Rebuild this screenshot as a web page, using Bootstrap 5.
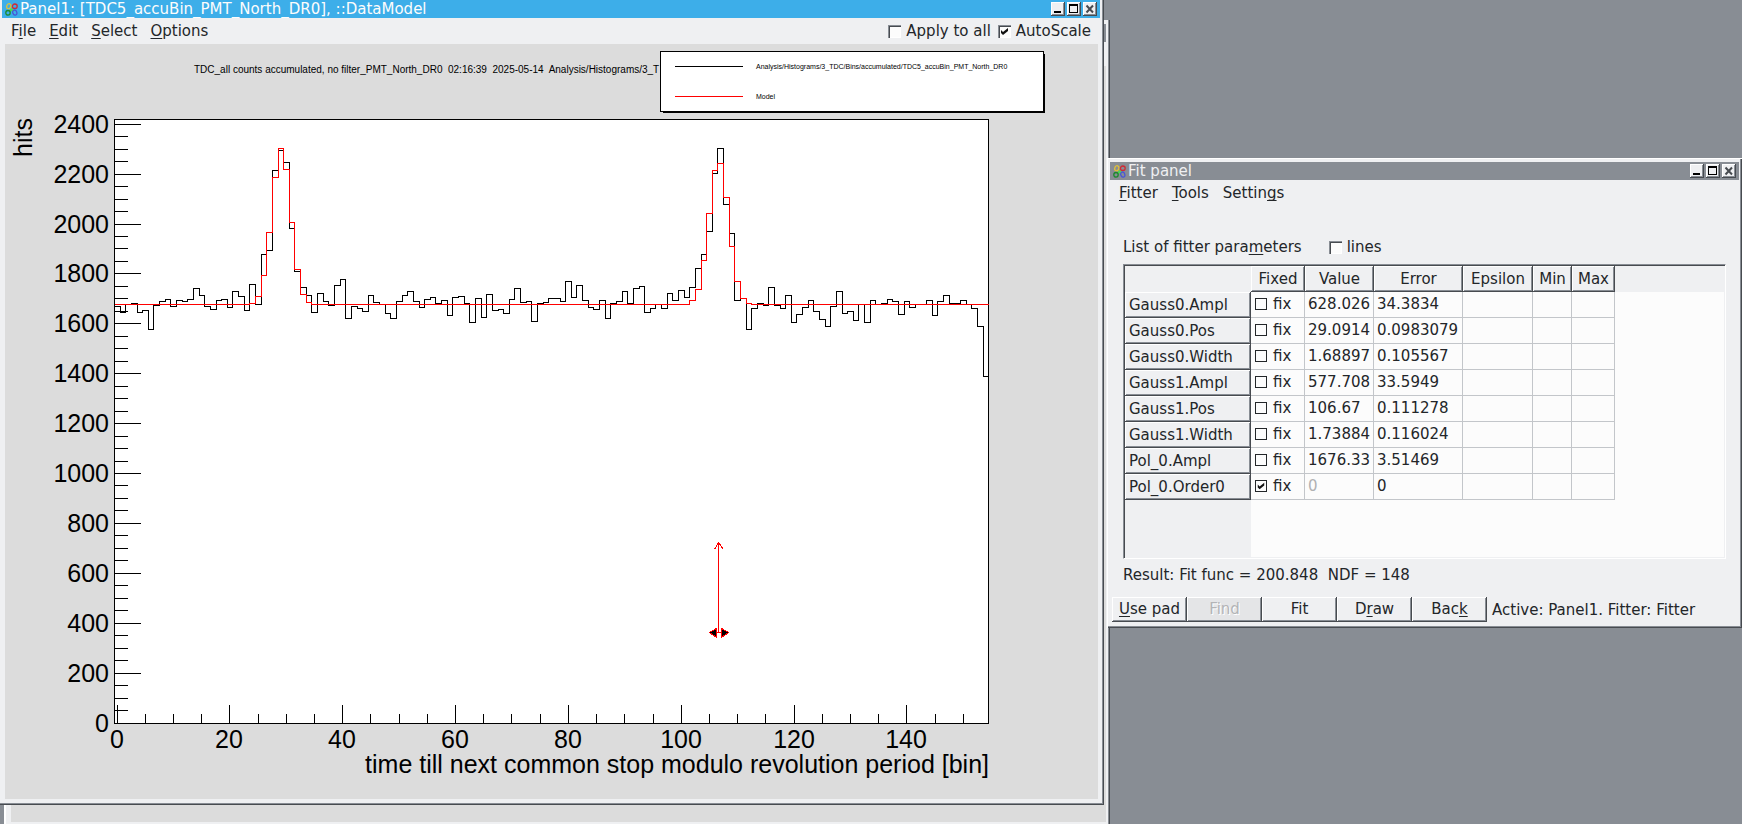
<!DOCTYPE html>
<html lang="en">
<head>
<meta charset="utf-8">
<meta name="viewport" content="width=device-width, initial-scale=1">
<title>Fit desktop</title>
<link href="https://cdn.jsdelivr.net/npm/bootstrap@5.3.0/dist/css/bootstrap.min.css" rel="stylesheet">
<script src="https://cdn.jsdelivr.net/npm/bootstrap@5.3.0/dist/js/bootstrap.bundle.min.js"></script>
<style>
  :root { --face: #eff0f2; --ink: #232629; --mid: #888d94; --dark: #474b50; --pad: #dcdcdc; --field: #fcfcfc; }
  body { background: var(--mid); color: var(--ink); font: 15px/22px "DejaVu Sans", sans-serif; }
  u { text-decoration: underline 1px; text-underline-offset: 2px; text-decoration-skip-ink: none; }

  /* window frames */
  .win { background: var(--face); box-shadow: inset -1px -1px var(--dark), inset -2px -2px var(--mid); }
  .win-back { left: 4px; top: 20px; width: calc(100% - 636px); height: calc(100% - 18px); padding: 4px 4px 4px 5px; border-left: 2px solid #fff; }
  .win-main { left: 0; top: 0; width: calc(100% - 638px); height: calc(100% - 19px); padding: 0 4px 6px 2px; }
  .win-fit { right: 0; top: 158px; width: 635px; padding: 3px 3px 6px 2px; border: 0 solid #fff; border-width: 1px 0 0 1px; }
  .titlebar { height: 18px; line-height: 18px; padding: 0 3px; gap: 2px; background: var(--mid); color: var(--face); }
  .titlebar.active { background: #3daee9; color: #fcfcfc; }
  .canvas-area { background: var(--pad); min-height: 0; }
  .canvas-main { margin: 0 2px 0 3px; }
  .raised { background: var(--face); border: 0; box-shadow: inset -1px -1px var(--dark), inset 1px 1px #fff, inset -2px -2px var(--mid); }
  .win-btns { gap: 2px; }
  .win-btn { width: 14px; height: 14px; padding: 0; }
  .win-btn svg, .app-icon { display: block; }

  /* menus and controls */
  .menu-row { height: 26px; line-height: 26px; padding: 0 9px; }
  .menu-main { gap: 13px; }
  .menu-fit { gap: 14px; }
  .menu-item { border: 0; background: none; padding: 0; color: inherit; line-height: inherit; }
  .tick-label { display: flex; align-items: center; gap: 5px; }
  .tick-pair { gap: 7px; }
  .tick { appearance: none; width: 13px; height: 13px; margin: 0; background: var(--field) center/13px 13px no-repeat; box-shadow: inset 1px 1px var(--mid), inset 2px 2px var(--dark), inset -1px -1px #fff; }
  .tick-flat { width: 12px; height: 12px; margin: 0 1px; box-shadow: inset 0 0 0 1px var(--ink); background-size: 12px 12px; }
  .tick:checked { background-image: url("data:image/svg+xml,%3Csvg xmlns='http://www.w3.org/2000/svg' viewBox='0 0 13 13'%3E%3Cpath d='M3 5l2 2 5-4v3l-5 4-2-2z' fill='%23111'/%3E%3C/svg%3E"); }

  /* parameter table */
  .fit-body { padding: 30px 13px 0; }
  .list-head { gap: 27px; margin-bottom: 6px; }
  .grid-frame { height: 295px; border: 1px solid; border-color: var(--mid) #fff #fff var(--mid);
    box-shadow: inset 1px 1px var(--dark), inset -1px -1px var(--face);
    padding: 1px;
    background: linear-gradient(var(--face), var(--face)) 0 0/100% 27px no-repeat, linear-gradient(var(--face), var(--face)) 0 0/127px 100% no-repeat, var(--field); }
  .params { table-layout: fixed; width: 490px; border-collapse: separate; border-spacing: 0; }
  .params th { font-weight: 400; height: 26px; line-height: 26px; padding: 0 4px; white-space: nowrap; }
  .params thead th { text-align: center; padding: 0; }
  .params td { height: 26px; line-height: 24px; padding: 0 0 1px 3px; border: 0 solid #c3c6ca; border-width: 0 1px 1px 0; white-space: nowrap; }
  .muted { color: #b0b1b3; }
  .result-line { margin: 5px 0 11px; white-space: pre; }
  .button-row { padding-left: 2px; }
  .push { width: 75px; height: 25px; line-height: 25px; padding: 0; color: inherit; }
  .push:disabled { background: #e4e5e7; color: #b3b4b6; text-shadow: 1px 1px #fff; }
  .status { padding-left: 5px; }

  /* plot */
  .plot { font-family: "Liberation Sans", Arial, sans-serif; fill: #000; }
  .plot .axis-text { font-size: 25px; }
  .plot .head-text { font-size: 10px; white-space: pre; }
  .plot .key-text { font-size: 7px; }
  .plot .stroke { fill: none; stroke: #000; stroke-width: 1; shape-rendering: crispEdges; }
  .plot .red { stroke: #f00; }
</style>
</head>
<body class="vh-100 overflow-hidden position-relative">

<svg class="d-none" aria-hidden="true">
  <symbol id="app" viewBox="0 0 13 13">
    <path d="M4.500 5l2 .8 2-.8-.4 1.800 1 1.700-2.200-.4-2.200.8.600-1.800z" fill="#4be04b"/>
    <g fill="none" stroke-width="1.300">
      <ellipse cx="3.800" cy="3.300" rx="2" ry="2.600" stroke="#e3c234" transform="rotate(20 3.800 3.300)"/>
      <ellipse cx="9.800" cy="3.200" rx="2.400" ry="2.200" stroke="#cf2b35"/>
      <ellipse cx="3" cy="9.800" rx="2.200" ry="2.300" stroke="#1c8a2c"/>
      <ellipse cx="9.800" cy="9.600" rx="2" ry="2.600" stroke="#4a55d6" transform="rotate(-20 9.800 9.600)"/>
    </g>
  </symbol>
  <symbol id="min" viewBox="0 0 14 14"><path d="M3 9h7v2H3z" fill="#000"/></symbol>
  <symbol id="max" viewBox="0 0 14 14"><path d="M2 2h9v9H2zM3 4v6h7V4z" fill="#000" fill-rule="evenodd"/></symbol>
  <symbol id="close" viewBox="0 0 14 14"><path d="M3.500 3.500l6.500 7M10 3.500l-6.500 7" stroke="#474b50" stroke-width="2" fill="none"/></symbol>
</svg>

<!-- window behind -->
<section class="win win-back position-absolute d-flex flex-column" aria-hidden="true">
  <div class="titlebar"></div>
  <div class="canvas-area flex-fill mt-4"></div>
</section>

<!-- histogram window -->
<main class="win win-main position-absolute d-flex flex-column">
  <header class="titlebar active d-flex align-items-center">
    <svg class="app-icon" width="13" height="13"><use href="#app"/></svg>
    <span class="flex-fill text-nowrap overflow-hidden">Panel1: [TDC5_accuBin_PMT_North_DR0], ::DataModel</span>
    <div class="win-btns d-flex">
      <button class="raised win-btn" aria-label="Minimize"><svg width="14" height="14"><use href="#min"/></svg></button>
      <button class="raised win-btn" aria-label="Maximize"><svg width="14" height="14"><use href="#max"/></svg></button>
      <button class="raised win-btn" aria-label="Close"><svg width="14" height="14"><use href="#close"/></svg></button>
    </div>
  </header>
  <div class="menu-row d-flex justify-content-between">
    <nav class="d-flex menu-main">
      <button class="menu-item">F<u>i</u>le</button>
      <button class="menu-item"><u>E</u>dit</button>
      <button class="menu-item"><u>S</u>elect</button>
      <button class="menu-item"><u>O</u>ptions</button>
    </nav>
    <div class="tick-pair d-flex">
      <label class="tick-label"><input type="checkbox" class="tick">Apply to all</label>
      <label class="tick-label"><input type="checkbox" class="tick" checked>AutoScale</label>
    </div>
  </div>
  <div class="canvas-area canvas-main flex-fill">
    <svg class="plot d-block w-100 h-100" viewBox="5 44 1093 755" role="img" aria-label="Histogram with fitted model">
      <text class="head-text" x="194" y="73" xml:space="preserve">TDC_all counts accumulated, no filter_PMT_North_DR0  02:16:39  2025-05-14  Analysis/Histograms/3_T</text>
      <rect x="114.500" y="119.500" width="874" height="604" fill="#fff" stroke="#000" shape-rendering="crispEdges"/>
      <path id="ticks" class="stroke"/>
      <g id="labels" class="axis-text"></g>
      <path id="hist" class="stroke"/>
      <path id="model" class="stroke red"/>
      <text class="axis-text" x="989" y="773" text-anchor="end">time till next common stop modulo revolution period [bin]</text>
      <text class="axis-text" transform="translate(32 118) rotate(-90)" text-anchor="end">hits</text>

      <!-- peak marker -->
      <path class="stroke red" d="M718.500 542v91M718.500 542.500l-4 7M718.500 542.500l5 7M710 632.500h18"/>
      <path d="M709.500 632.500l7-4v9zM728.500 632.500l-7-4v9z" fill="#000" stroke="#f00" shape-rendering="crispEdges"/>

      <!-- legend -->
      <rect x="663" y="54" width="382" height="59"/>
      <rect x="660.500" y="51.500" width="383" height="60" fill="#fff" stroke="#000" shape-rendering="crispEdges"/>
      <path class="stroke" d="M675 66.500h68"/>
      <path class="stroke red" d="M675 96.500h68"/>
      <text class="key-text" x="756" y="69">Analysis/Histograms/3_TDC/Bins/accumulated/TDC5_accuBin_PMT_North_DR0</text>
      <text class="key-text" x="756" y="99">Model</text>
    </svg>
  </div>
</main>

<!-- fit panel -->
<section class="win win-fit position-absolute">
  <header class="titlebar d-flex align-items-center">
    <svg class="app-icon" width="13" height="13"><use href="#app"/></svg>
    <span class="flex-fill">Fit panel</span>
    <div class="win-btns d-flex">
      <button class="raised win-btn" aria-label="Minimize"><svg width="14" height="14"><use href="#min"/></svg></button>
      <button class="raised win-btn" aria-label="Maximize"><svg width="14" height="14"><use href="#max"/></svg></button>
      <button class="raised win-btn" aria-label="Close"><svg width="14" height="14"><use href="#close"/></svg></button>
    </div>
  </header>
  <nav class="menu-row d-flex menu-fit">
    <button class="menu-item"><u>F</u>itter</button>
    <button class="menu-item"><u>T</u>ools</button>
    <button class="menu-item">Settin<u>g</u>s</button>
  </nav>
  <div class="fit-body">
    <div class="list-head d-flex align-items-center">
      <span>List of fitter para<u>m</u>eters</span>
      <label class="tick-label"><input type="checkbox" class="tick">lines</label>
    </div>
    <div class="grid-frame">
      <table class="params">
        <colgroup><col style="width:126px"><col style="width:54px"><col style="width:69px"><col style="width:89px"><col style="width:70px"><col style="width:39px"><col style="width:43px"></colgroup>
        <thead><tr><td class="border-0"></td><th class="raised">Fixed</th><th class="raised">Value</th><th class="raised">Error</th><th class="raised">Epsilon</th><th class="raised">Min</th><th class="raised">Max</th></tr></thead>
        <tbody id="rows"></tbody>
      </table>
    </div>
    <div class="result-line">Result: Fit func = 200.848  NDF = 148</div>
  </div>
  <div class="button-row d-flex">
    <button class="raised push"><u>U</u>se pad</button>
    <button class="raised push" disabled>Find</button>
    <button class="raised push">Fit</button>
    <button class="raised push">D<u>r</u>aw</button>
    <button class="raised push">Bac<u>k</u></button>
    <span class="status align-self-center">Active: Panel1. Fitter: Fitter</span>
  </div>
</section>

<script>
  // fitted parameters: name, value, error, fixed
  const params = [
    ['Gauss0.Ampl', '628.026', '34.3834'], ['Gauss0.Pos', '29.0914', '0.0983079'], ['Gauss0.Width', '1.68897', '0.105567'],
    ['Gauss1.Ampl', '577.708', '33.5949'], ['Gauss1.Pos', '106.67', '0.111278'], ['Gauss1.Width', '1.73884', '0.116024'],
    ['Pol_0.Ampl', '1676.33', '3.51469'], ['Pol_0.Order0', '0', '0', true]
  ];
  document.getElementById('rows').innerHTML = params.map(([name, value, error, fixed]) =>
    `<tr><th class="raised" scope="row">${name}</th>
     <td><label class="tick-label"><input type="checkbox" class="tick tick-flat" ${fixed ? 'checked' : ''}>fix</label></td>
     <td class="${fixed ? 'muted' : ''}">${value}</td><td>${error}</td><td></td><td></td><td></td></tr>`).join('');

  // bin heights as plot ordinates, measured from y = 120
  const hist = [186,192,184,183,192,190,209,185,181,179,186,180,181,179,168,175,186,189,180,179,187,171,176,190,164,184,134,130,50,30,42,108,151,167,175,192,173,181,185,165,159,198,186,188,191,175,182,184,193,198,
    181,175,171,181,187,179,177,183,180,195,177,176,183,202,178,197,174,190,189,193,179,168,182,181,201,183,182,178,178,181,161,177,165,180,187,189,180,198,183,181,171,183,168,166,192,188,184,188,173,180,
    170,177,167,148,134,111,53,28,84,113,180,178,209,188,183,185,167,185,188,175,202,194,187,180,191,199,206,186,171,193,191,200,184,202,180,184,183,179,181,194,181,187,184,184,180,195,181,175,183,183,180,184,188,206,256];
  const model = new Array(155).fill(184);
  [183,176,155,112,57,28,49,102,149,174,182].forEach((v, i) => model[24 + i] = v);
  [180,169,140,93,50,43,77,126,161,178,183].forEach((v, i) => model[102 + i] = v);

  const edge = i => Math.min(988, Math.round(114 + 5.64 * i)) + 0.5;
  const steps = bins => bins.map((v, i) => `${i ? 'V' : 'M' + edge(0) + ' '}${v + 120.5}H${edge(i + 1)}`).join('');
  document.getElementById('hist').setAttribute('d', steps(hist));
  document.getElementById('model').setAttribute('d', steps(model));

  let ticks = '', labels = '';
  for (let v = 0; v <= 2400; v += 50) {
    const y = Math.floor(723 - v * 0.2495), major = v % 200 === 0;
    ticks += `M114 ${y + 0.5}h${major ? 27 : 14}`;
    if (major) labels += `<text x="109" y="${y + 9}" text-anchor="end">${v}</text>`;
  }
  for (let b = 0; b < 155; b += 5) {
    const x = Math.floor(117 + b * 5.6425), major = b % 20 === 0;
    ticks += `M${x + 0.5} 724v${major ? -19 : -10}`;
    if (major) labels += `<text x="${x}" y="748" text-anchor="middle">${b}</text>`;
  }
  document.getElementById('ticks').setAttribute('d', ticks);
  document.getElementById('labels').innerHTML = labels;
</script>
</body>
</html>
